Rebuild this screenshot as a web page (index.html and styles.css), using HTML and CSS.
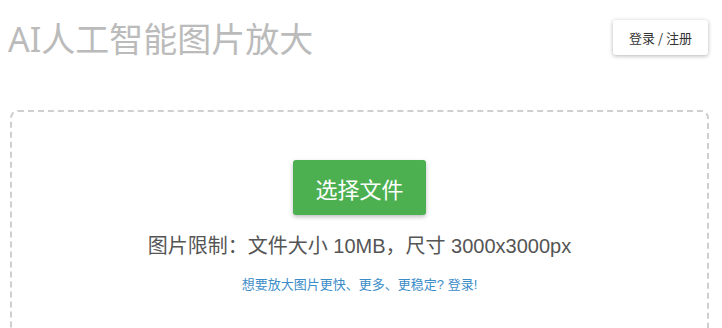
FILE: index.html
```html
<!DOCTYPE html>
<html lang="zh">
<head>
<meta charset="utf-8">
<title>AI人工智能图片放大</title>
<link rel="stylesheet" href="styles.css">
</head>
<body>
<header class="top">
  <h1 class="title">AI人工智能图片放大</h1>
  <button class="login">登录 / 注册</button>
</header>
<main class="drop">
  <button class="pick">选择文件</button>
  <p class="limit">图片限制<span class="punct">：</span>文件大小 10MB<span class="punct">，</span>尺寸 3000x3000px</p>
  <a class="promo" href="#">想要放大图片更快<span class="punct">、</span>更多<span class="punct">、</span>更稳定? 登录!</a>
</main>
</body>
</html>
```
FILE: styles.css
```css
html, body {
  margin: 0;
  padding: 0;
  background: #fff;
  font-family: "Noto Sans", "Noto Sans CJK SC", sans-serif;
  overflow: hidden;
}
.top {
  display: flex;
  justify-content: space-between;
  align-items: flex-start;
  padding: 0 14px 0 8px;
  height: 110px;
}
.title {
  margin: 14px 0 0;
  font-size: 34px;
  font-weight: 400;
  color: #bbbbbb;
  line-height: 50px;
  letter-spacing: 0;
}
.login {
  margin-top: 20px;
  width: 95px;
  height: 35px;
  border: none;
  border-radius: 3px;
  background: #fff;
  box-shadow: 0 1px 4px rgba(0,0,0,0.3);
  font-family: "Noto Sans CJK SC", sans-serif;
  font-size: 13px;
  color: #333;
  padding: 0;
}
.drop {
  margin: 0 13px 0 10px;
  height: 260px;
  border: 2px dashed #cfcfcf;
  border-radius: 8px;
  display: flex;
  flex-direction: column;
  align-items: center;
  padding-top: 48px;
  box-sizing: border-box;
}
.pick {
  width: 133px;
  height: 55px;
  border: none;
  border-radius: 3px;
  background: #4caf50;
  color: #fff;
  font-family: "Noto Sans CJK SC", sans-serif;
  font-size: 22px;
  box-shadow: 0 2px 4px rgba(0,0,0,0.25);
  padding: 0;
}
.limit {
  margin: 17px 0 0;
  font-family: "Liberation Sans", "Noto Sans CJK SC", sans-serif;
  font-size: 20px;
  color: #555;
  line-height: 26px;
}
.punct {
  font-family: "Noto Sans CJK TC", sans-serif;
}
.promo {
  margin-top: 16px;
  font-family: "Liberation Sans", "Noto Sans CJK SC", sans-serif;
  font-size: 13px;
  line-height: 18px;
  color: #3b8dc8;
  text-decoration: none;
}
```
